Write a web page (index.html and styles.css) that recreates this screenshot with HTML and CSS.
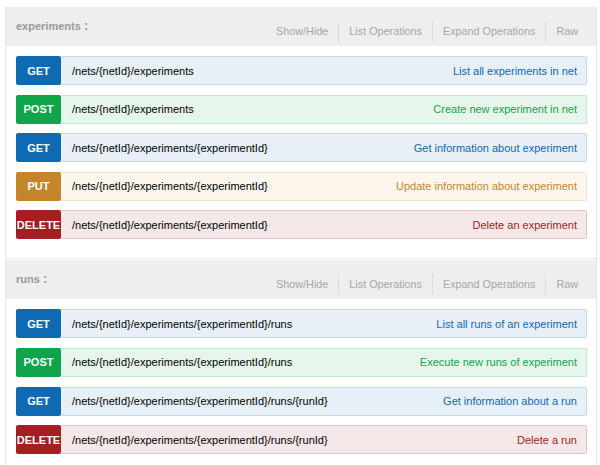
FILE: index.html
```html
<!DOCTYPE html>
<html>
<head>
<meta charset="utf-8">
<link rel="stylesheet" href="styles.css">
</head>
<body>
<div class="resource">
  <div class="heading">
    <h2 class="title">experiments <span class="colon">:</span></h2>
    <ul class="options">
      <li>Show/Hide</li>
      <li>List Operations</li>
      <li>Expand Operations</li>
      <li>Raw</li>
    </ul>
  </div>
  <div class="ops">
    <div class="op get"><span class="method">GET</span><div class="bar"><span class="path">/nets/{netId}/experiments</span><span class="desc">List all experiments in net</span></div></div>
    <div class="op post"><span class="method">POST</span><div class="bar"><span class="path">/nets/{netId}/experiments</span><span class="desc">Create new experiment in net</span></div></div>
    <div class="op get"><span class="method">GET</span><div class="bar"><span class="path">/nets/{netId}/experiments/{experimentId}</span><span class="desc">Get information about experiment</span></div></div>
    <div class="op put"><span class="method">PUT</span><div class="bar"><span class="path">/nets/{netId}/experiments/{experimentId}</span><span class="desc">Update information about experiment</span></div></div>
    <div class="op delete"><span class="method">DELETE</span><div class="bar"><span class="path">/nets/{netId}/experiments/{experimentId}</span><span class="desc">Delete an experiment</span></div></div>
  </div>
</div>
<div class="resource">
  <div class="heading">
    <h2 class="title">runs <span class="colon">:</span></h2>
    <ul class="options">
      <li>Show/Hide</li>
      <li>List Operations</li>
      <li>Expand Operations</li>
      <li>Raw</li>
    </ul>
  </div>
  <div class="ops">
    <div class="op get"><span class="method">GET</span><div class="bar"><span class="path">/nets/{netId}/experiments/{experimentId}/runs</span><span class="desc">List all runs of an experiment</span></div></div>
    <div class="op post"><span class="method">POST</span><div class="bar"><span class="path">/nets/{netId}/experiments/{experimentId}/runs</span><span class="desc">Execute new runs of experiment</span></div></div>
    <div class="op get"><span class="method">GET</span><div class="bar"><span class="path">/nets/{netId}/experiments/{experimentId}/runs/{runId}</span><span class="desc">Get information about a run</span></div></div>
    <div class="op delete"><span class="method">DELETE</span><div class="bar"><span class="path">/nets/{netId}/experiments/{experimentId}/runs/{runId}</span><span class="desc">Delete a run</span></div></div>
  </div>
</div>
</body>
</html>
```
FILE: styles.css
```css
html, body {
  margin: 0;
  padding: 0;
  background: #fff;
}
body {
  font-family: "Liberation Sans", Arial, sans-serif;
  font-size: 11px;
  padding: 7px 3px 0 5px;
}
.resource {
  border: 1px solid #e6e6e6;
  border-top: none;
  margin-bottom: 1px;
}
.heading {
  display: flex;
  justify-content: space-between;
  align-items: flex-start;
  height: 39px;
  background: #eeeeee;
  padding: 0 8px 0 10px;
}
.title {
  margin: 12px 0 0 0;
  font-size: 11px;
  line-height: 14px;
  font-weight: bold;
  color: #999;
}
.colon {
  font-weight: bold;
  font-size: 13px;
}
.options {
  list-style: none;
  margin: 14px 0 0 0;
  padding: 0;
  display: flex;
}
.options li {
  padding: 0 10px;
  height: 21px;
  line-height: 21px;
  font-size: 10.8px;
  color: #a6a6a6;
  border-right: 1px solid #dcdcdc;
}
.options li:last-child {
  border-right: none;
}
.ops {
  padding: 10px 9px 19px 10px;
  display: flex;
  flex-direction: column;
  gap: 9.6px;
}
.op {
  display: flex;
  height: 29px;
}
.method {
  width: 45px;
  flex: none;
  display: flex;
  align-items: center;
  justify-content: center;
  color: #fff;
  font-weight: bold;
  font-size: 11px;
  border-radius: 2px;
}
.bar {
  flex: 1;
  display: flex;
  justify-content: space-between;
  align-items: center;
  padding: 0 9px 0 11px;
  border: 1px solid;
  border-left: none;
  border-radius: 0 2px 2px 0;
}
.path {
  color: #000;
}
.get .method { background: #0f6ab4; }
.get .bar { background: #e7f0f7; border-color: #c3d9ec; }
.get .desc { color: #0f6ab4; }
.post .method { background: #10a54a; }
.post .bar { background: #e7f6ec; border-color: #c3e8d1; }
.post .desc { color: #10a54a; }
.put .method { background: #c5862b; }
.put .bar { background: #fcf6ed; border-color: #f0e0ca; }
.put .desc { color: #c5862b; }
.delete .method { background: #a41e22; }
.delete .bar { background: #f5e8e8; border-color: #e8c6c7; }
.delete .desc { color: #a41e22; }
```
